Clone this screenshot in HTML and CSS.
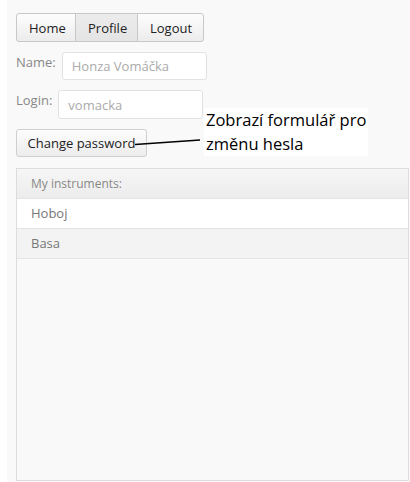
FILE: index.html
```html
<!DOCTYPE html>
<html lang="cs">
<head>
<meta charset="utf-8">
<title>Profile</title>
<link rel="stylesheet" href="styles.css">
</head>
<body>
<div class="app">
  <nav class="btn-group">
    <button class="btn">Home</button>
    <button class="btn active">Profile</button>
    <button class="btn">Logout</button>
  </nav>

  <div class="field">
    <span class="label">Name:</span>
    <input class="input name" type="text" placeholder="Honza Vomáčka">
  </div>
  <div class="field">
    <span class="label">Login:</span>
    <input class="input login" type="text" placeholder="vomacka">
  </div>

  <div class="action">
    <button class="btn single">Change password</button>
    <div class="note">Zobrazí formulář pro<br>změnu hesla</div>
    <svg class="pointer" width="70" height="10" viewBox="0 0 70 10">
      <path d="M1 7.5 L66 3" stroke="#000" stroke-width="1.6" fill="none"/>
    </svg>
  </div>

  <section class="list">
    <div class="list-head">My instruments:</div>
    <div class="list-row">Hoboj</div>
    <div class="list-row alt">Basa</div>
  </section>
</div>
</body>
</html>
```
FILE: styles.css
```css
html, body {
  margin: 0;
  padding: 0;
  background: #fff;
  height: 100%;
}

.app {
  margin-left: 7px;
  height: 482px;
  box-sizing: border-box;
  background: #f9f9f9;
  padding: 13px 1px 1px 9px;
  font-family: "Open Sans", "Noto Sans", sans-serif;
  font-size: 13px;
  color: #222;
  display: flex;
  flex-direction: column;
}

.btn-group {
  display: flex;
  align-self: flex-start;
  height: 29px;
}

.btn {
  font-family: inherit;
  font-size: 13px;
  color: #222;
  border: 1px solid #c8c8c8;
  background: linear-gradient(#fdfdfd, #ececec);
  padding: 0 12px;
  margin: 0;
  height: 100%;
}

.btn-group .btn {
  border-radius: 0;
  margin-left: -1px;
}
.btn-group .btn:first-child {
  margin-left: 0;
  width: 60px;
  border-radius: 3px 0 0 3px;
}
.btn-group .btn.active {
  width: 63px;
  background: linear-gradient(#ececec, #e4e4e4);
}
.btn-group .btn:last-child {
  width: 67px;
  border-radius: 0 3px 3px 0;
}

.field {
  display: flex;
  align-items: flex-start;
  margin-top: 10px;
  height: 28px;
}
.field + .field {
  height: 29px;
}

.label {
  color: #888;
  font-size: 13px;
  padding-top: 1px;
  margin-right: 6px;
}

.input {
  box-sizing: border-box;
  height: 100%;
  width: 145px;
  border: 1px solid #e2e2e2;
  border-radius: 3px;
  background: #fff;
  font-family: inherit;
  font-size: 13px;
  padding: 0 9px;
  margin: 0;
  outline: none;
}
.input::placeholder {
  color: #aaa;
}

.action {
  position: relative;
  margin-top: 10px;
  height: 28px;
  display: flex;
}

.btn.single {
  border-radius: 3px;
  width: 131px;
  padding: 0;
  border-color: #cfcfcf;
}

.note {
  position: absolute;
  left: 188px;
  top: -21px;
  font-family: "Open Sans", "Noto Sans", sans-serif;
  font-size: 16.5px;
  line-height: 24px;
  color: #000;
  background: #fff;
  padding: 0 2px;
}

.pointer {
  position: absolute;
  left: 118px;
  top: 8px;
}

.list {
  margin-top: 11px;
  flex: 1;
  border: 1px solid #ddd;
  background: #f9f9f9;
}

.list-head {
  height: 29px;
  line-height: 29px;
  padding-left: 14px;
  font-size: 12px;
  color: #888;
  background: linear-gradient(#f6f6f6, #ececec);
  border-bottom: 1px solid #e4e4e4;
}

.list-row {
  height: 29px;
  line-height: 29px;
  padding-left: 14px;
  font-size: 13px;
  color: #777;
  background: #fff;
  border-bottom: 1px solid #e4e4e4;
}
.list-row.alt {
  background: #f3f3f3;
}
```
